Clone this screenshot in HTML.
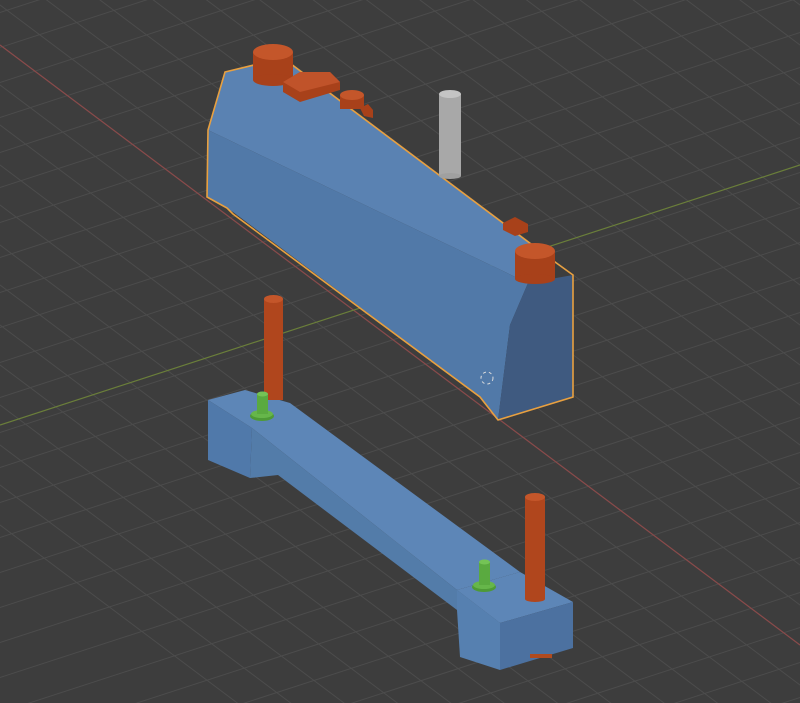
<!DOCTYPE html>
<html><head><style>html,body{margin:0;padding:0;background:#3d3d3d;overflow:hidden;width:800px;height:703px}svg{display:block}</style></head>
<body>
<svg width="800" height="703" viewBox="0 0 800 703" xmlns="http://www.w3.org/2000/svg">
<rect width="800" height="703" fill="#3d3d3d"/>
<g stroke="#4c4c4c" stroke-width="1">
<path d="M-400 -255 L1200 945 M-400 -215 L1200 985 M-400 -175 L1200 1025 M-400 -135 L1200 1065 M-400 -95 L1200 1105 M-400 -55 L1200 1145 M-400 -15 L1200 1185 M-400 25 L1200 1225 M-400 65 L1200 1265 M-400 105 L1200 1305 M-400 145 L1200 1345 M-400 185 L1200 1385 M-400 225 L1200 1425 M-400 -295 L1200 905 M-400 -335 L1200 865 M-400 -375 L1200 825 M-400 -415 L1200 785 M-400 -455 L1200 745 M-400 -495 L1200 705 M-400 -535 L1200 665 M-400 -575 L1200 625 M-400 -615 L1200 585 M-400 -655 L1200 545 M-400 -695 L1200 505 M-400 -735 L1200 465 M-400 -775 L1200 425 M-400 -815 L1200 385 M-400 -855 L1200 345 M-400 -895 L1200 305 M-400 -935 L1200 265 M-400 -975 L1200 225 M-400 -1015 L1200 185"/>
<path d="M-100 -200 L900 -525 M-100 -165 L900 -490 M-100 -130 L900 -455 M-100 -95 L900 -420 M-100 -60 L900 -385 M-100 -25 L900 -350 M-100 10 L900 -315 M-100 45 L900 -280 M-100 80 L900 -245 M-100 115 L900 -210 M-100 150 L900 -175 M-100 185 L900 -140 M-100 220 L900 -105 M-100 255 L900 -70 M-100 290 L900 -35 M-100 325 L900 0 M-100 360 L900 35 M-100 395 L900 70 M-100 430 L900 105 M-100 465 L900 140 M-100 500 L900 175 M-100 535 L900 210 M-100 570 L900 245 M-100 605 L900 280 M-100 640 L900 315 M-100 675 L900 350 M-100 710 L900 385 M-100 745 L900 420 M-100 780 L900 455 M-100 815 L900 490 M-100 850 L900 525 M-100 885 L900 560 M-100 920 L900 595 M-100 955 L900 630 M-100 990 L900 665 M-100 1025 L900 700 M-100 1060 L900 735 M-100 1095 L900 770"/>
</g>
<line x1="0" y1="45" x2="800" y2="645" stroke="#8a4a4a" stroke-width="1.2"/>
<line x1="0" y1="425" x2="800" y2="165" stroke="#6a7e3a" stroke-width="1.2"/>

<!-- top object -->
<polygon points="225,72 283,58 555,262 528,283 208,130" fill="#5a82b2"/>
<polygon points="208,130 528,283 510,325 498,420 480,397 233,212 207,197" fill="#5179a8"/>
<polygon points="528,283 573,275 573,397 498,420 510,325" fill="#3f5a80"/>
<polygon points="225,72 283,58 555,262 573,275 573,397 498,420 480,397 233,214 227,208 207,197 208,130" fill="none" stroke="#e8a040" stroke-width="1.6"/>
<rect x="253" y="52" width="40" height="28" fill="#a8411a"/>
<ellipse cx="273" cy="80" rx="20" ry="6" fill="#a8411a"/>
<ellipse cx="273" cy="52" rx="20" ry="8" fill="#c4562a"/>
<polygon points="283,82 300,72 330,72 340,82 340,90 300,102 283,92" fill="#a8411a"/>
<polygon points="283,82 300,72 330,72 340,82 300,92" fill="#c0532a"/>
<rect x="340" y="95" width="24" height="14" fill="#a8411a"/>
<ellipse cx="352" cy="95" rx="12" ry="5" fill="#c4562a"/>
<polygon points="360,108 368,104 373,110 373,118 364,116" fill="#a8411a"/>
<polygon points="503,223 515,217 528,224 528,232 515,236 503,230" fill="#a8411a"/>
<rect x="515" y="251" width="40" height="28" fill="#a8411a"/>
<ellipse cx="535" cy="279" rx="20" ry="5" fill="#a8411a"/>
<ellipse cx="535" cy="251" rx="20" ry="8" fill="#c4562a"/>
<rect x="439" y="94" width="22" height="82" fill="#a8a8a8"/>
<ellipse cx="450" cy="176" rx="11" ry="3" fill="#a0a0a0"/>
<ellipse cx="450" cy="94" rx="11" ry="4" fill="#c4c4c4"/>
<circle cx="487" cy="378" r="6" fill="none" stroke="#dddddd" stroke-width="1" stroke-dasharray="3 3"/>

<!-- bottom object -->
<polygon points="208,400 245,390 290,403 520,572 457,590 252,428" fill="#5d86b7"/>
<polygon points="457,590 520,572 573,602 500,623" fill="#5d86b7"/>
<polygon points="208,400 252,428 250,478 208,460" fill="#5079aa"/>
<polygon points="252,428 457,590 500,623 457,610 278,475 250,478" fill="#537ca9"/>
<polygon points="457,590 500,623 500,670 460,657 457,610" fill="#5680b0"/>
<polygon points="500,623 573,602 573,648 500,670" fill="#4c71a0"/>
<rect x="530" y="654" width="22" height="4" fill="#b04a1e"/>
<rect x="264" y="299" width="19" height="101" fill="#b0461d"/>
<ellipse cx="273.5" cy="299" rx="9.5" ry="4" fill="#c4562a"/>
<rect x="525" y="497" width="20" height="102" fill="#b0461d"/>
<ellipse cx="535" cy="599" rx="10" ry="3" fill="#b0461d"/>
<ellipse cx="535" cy="497" rx="10" ry="4" fill="#c4562a"/>
<ellipse cx="262" cy="416" rx="12" ry="5" fill="#4e9a36"/>
<ellipse cx="262" cy="414" rx="11" ry="4" fill="#66b64a"/>
<rect x="257" y="394" width="11" height="20" fill="#5aaa40"/>
<ellipse cx="262.5" cy="394" rx="5.5" ry="2.5" fill="#74c456"/>
<ellipse cx="484" cy="587" rx="12" ry="5" fill="#4e9a36"/>
<ellipse cx="484" cy="585" rx="11" ry="4" fill="#66b64a"/>
<rect x="479" y="562" width="11" height="23" fill="#5aaa40"/>
<ellipse cx="484.5" cy="562" rx="5.5" ry="2.5" fill="#74c456"/>
</svg>
</body></html>
